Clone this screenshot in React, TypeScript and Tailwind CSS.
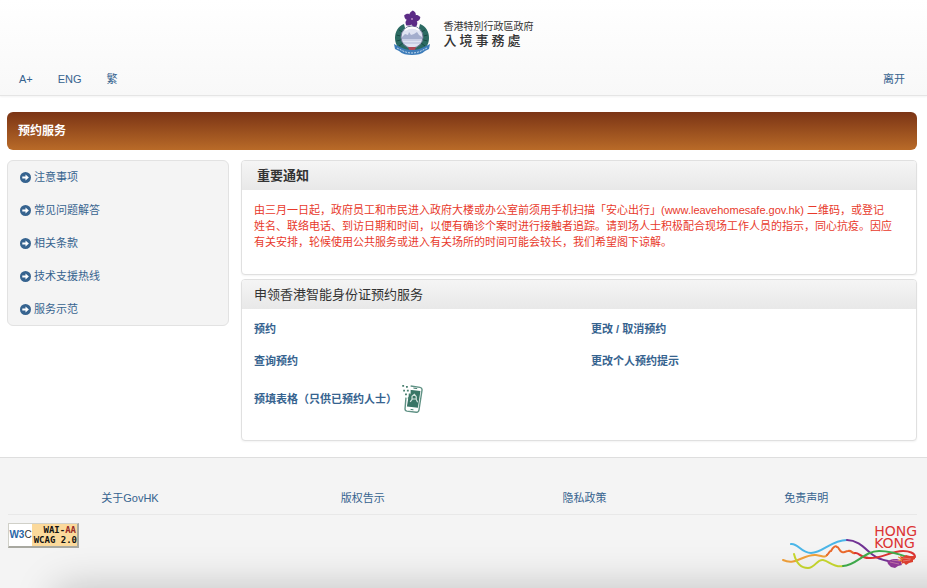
import React from 'react';

const LINK = 'text-[#36638f] hover:underline';

const MENU = ['注意事项', '常见问题解答', '相关条款', '技术支援热线', '服务示范'];
const FOOTER_LINKS = ['关于GovHK', '版权告示', '隐私政策', '免责声明'];

const PETAL = 'M18 8.500c-4-2-5-6-1-9 5 1 5 6 1 9z';

const Emblem: React.FC = () => (
  <svg viewBox="0 -1 36 46" className="w-9 h-[46px]" aria-hidden="true">
    <path d="M10 13C4 15 1 21 1 27c0 6 3 11 9 13h16c6-2 9-7 9-13 0-6-3-12-9-14l-1 4H11z" fill="#2b6a62" />
    <path d="M5 19l4 2M2.500 24l4 1M2.500 30l4-1M5 35l4-3M31 19l-4 2M33.500 24l-4 1M33.500 30l-4-1M31 35l-4-3" stroke="#174a44" strokeWidth="1" />
    <circle cx="18" cy="26" r="11" fill="#dfe3f2" stroke="#6f7794" strokeWidth="1" />
    <path d="M8 26l3-3 3 1 1-3 2 3 3-1 3-2 2 3 3 2v2H8z" fill="#a3adcd" />
    <path d="M8 29h20M9 32h18" stroke="#b3bbd8" strokeWidth="1" />
    <path d="M11 19c4-3 10-3 14 0" fill="none" stroke="#fff" strokeWidth="2" />
    <g fill="#5c2c86" transform="rotate(12 18 8)">
      <path d={PETAL} />
      <path d={PETAL} transform="rotate(72 18 8)" />
      <path d={PETAL} transform="rotate(144 18 8)" />
      <path d={PETAL} transform="rotate(216 18 8)" />
      <path d={PETAL} transform="rotate(288 18 8)" />
    </g>
    <circle cx="18" cy="8" r="1" fill="#b98cc6" />
    <path d="M14 36h8l-1 3h-6z" fill="#b04a58" />
    <path d="M0 33l6 3c7 4 17 4 24 0l6-3-1 5-4 2c-3 3-8 4-13 4S8 43 5 40l-4-2z" fill="#3d7cba" />
    <path d="M3 37l4 2c7 4 15 4 22 0l4-2" fill="none" stroke="#c3d9ec" strokeDasharray="2 1" />
  </svg>
);

const ArrowIcon: React.FC = () => (
  <svg viewBox="0 0 12 12" className="w-[11px] h-[11px]" aria-hidden="true">
    <circle cx="6" cy="6" r="6" fill="#36638f" />
    <path d="M2.500 5h3.500V2.800L9.700 6 6 9.200V7H2.500z" fill="#fff" />
  </svg>
);

const PhoneIcon: React.FC = () => (
  <svg viewBox="0 0 22 30" className="w-[21px] h-7" aria-hidden="true">
    <path d="M9 1l10 1.500q2.500.5 2.200 3L18 26.500q-.5 3-3 2.700L5 28q-2.200-.4-2-2.500l1-12" fill="#fff" stroke="#5f9184" strokeWidth="1.500" />
    <path d="M8 5l11.500 1.500-2.700 18L5 23z" fill="#397566" />
    <path d="M12 3.300l4 .6M9 26.200l3 .4" stroke="#397566" strokeWidth="1" />
    <path d="M8.500 18l2-2.500V12l2.500-2 2 2.500v3l1.500 3M10.500 15h4" fill="none" stroke="#d2e2dd" strokeWidth="1.300" />
    <path d="M5 3h4v7H4z" fill="#fff" />
    <path d="M0 0h2v2H0zM4 1h2v2H4zM1 5h2v2H1zM5 5h2v2H5zM3 9h2v2H3zM7 9h2v2H7zM6 13h2v2H6z" fill="#4b8070" />
  </svg>
);

const WaiBadge: React.FC = () => (
  <a
    href="#"
    className="flex w-[71px] h-[25px] border-t border-l border-t-[#d0d0c8] border-l-[#d0d0c8] border-b-2 border-r-2 border-b-[#a8a8a0] border-r-[#a8a8a0] bg-[#fbd99b] text-[9px] font-bold overflow-hidden"
  >
    <span className="w-[23px] bg-white text-center text-[10px] leading-[22px] text-[#2867a8]">
      W3<span className="font-normal text-[#333]">C</span>
    </span>
    <span className="flex-1 flex flex-col items-end pt-px font-['DejaVu_Sans_Mono',monospace] leading-[10px] text-[#111]">
      <span className="pr-px">WAI-<span className="text-[#972d28]">AA</span></span>
      <span>WCAG 2.0</span>
    </span>
  </a>
);

// Dragon ribbon with the word mark above its head
const BrandHongKong: React.FC = () => (
  <div className="flex flex-col items-end">
    <div className="flex flex-col pt-0.5 text-[14px] leading-3 text-[#dc3434] font-['DejaVu_Sans',sans-serif]">
      <span>HONG</span>
      <span>KONG</span>
    </div>
    <svg viewBox="0 14 135 34" className="w-[135px] h-[34px] -mt-3" aria-hidden="true">
      <g fill="none" strokeLinecap="round" strokeWidth="2">
        <path d="M9 21c7-1 10 9 20 9 12 0 20-13 36-13" stroke="#4bb6e8" />
        <path d="M65 17c12 0 19 10 26 15 5 4 10 5 15 6" stroke="#713394" />
        <path d="M1 37c13 6 20-6 33-5 7 1 9 3 11 0" stroke="#f0a03b" />
        <path d="M45 32c2-1 2-4 4-4 2-4 5-6 6-4 2 0 2 4 5 5 4 1 3-1 6-1 4-1 4 3 7 2" stroke="#ea6a2d" />
        <path d="M73 30c4-1 5 5 14 5 13 1 21-7 34-7 6 0 12 2 12 6" stroke="#dc3434" />
        <path d="M12 31c2 8 6 14 14 14 7 0 9-9 15-8 6 1 11 8 20 6" stroke="#c7d72e" />
        <path d="M61 43c13 0 21-15 36-15 10 0 20 3 28 6" stroke="#3fac4c" />
      </g>
      <path d="M105 38l6-2 4 0 5 2-1 2 1 2-4 1-3 2-4-1-3-3z" fill="#923a9a" />
      <path d="M118 33l3 1 3-2 4 1 5 0v3l-2 1v2l-4 1-3 2-2-2-3 1 1-2-2-1 2-1-3-1 2-1z" fill="#e0402f" />
      <path d="M116 34l5 2M116 37l4 1" stroke="#f0902b" strokeWidth="1" />
      <path d="M108 39l9 2M110 37l8 1M121 35l8 1M121 38l7-1" stroke="#f0b0b4" strokeWidth=".5" />
    </svg>
  </div>
);

interface PanelProps {
  title: string;
  bold?: boolean;
  children: React.ReactNode;
}

const Panel: React.FC<PanelProps> = ({ title, bold, children }) => (
  <section className="border border-[#e0e0e0] rounded bg-white shadow-xs overflow-hidden">
    <h2
      className={
        bold
          ? 'h-[29px] px-[15px] text-[13px] leading-[29px] font-bold bg-linear-to-b from-[#f5f5f5] to-[#e8e8e8]'
          : 'h-[29px] px-3 text-[13px] leading-[29px] bg-linear-to-b from-[#f5f5f5] to-[#e8e8e8]'
      }
    >
      {title}
    </h2>
    {children}
  </section>
);

const App: React.FC = () => (
  <div className="min-h-screen flex flex-col bg-white text-[11px] leading-4 text-[#333] font-['Liberation_Sans','Noto_Sans_CJK_SC',sans-serif]">
    <header className="border-b border-[#e5e5e5] bg-linear-to-b from-white to-[#f8f8f8] shadow-xs">
      <div className="flex justify-center items-center gap-3.5 pt-2.5">
        <Emblem />
        <div className="text-[#333] font-['Noto_Sans_CJK_TC',sans-serif]" lang="zh-HK">
          <p className="text-[10px] leading-[14px]">香港特別行政區政府</p>
          <p className="flex gap-[3px] text-[13px] leading-[14px] font-medium">
            {['入', '境', '事', '務', '處'].map(c => <span key={c}>{c}</span>)}
          </p>
        </div>
      </div>
      <nav className="flex justify-between pl-[19px] pr-[22px] pt-[15px] pb-2">
        <div className="flex gap-[25px]">
          <a href="#" className={LINK}>A+</a>
          <a href="#" className={LINK}>ENG</a>
          <a href="#" className={LINK}>繁</a>
        </div>
        <a href="#" className={LINK}>离开</a>
      </nav>
    </header>

    <main className="pl-[7px] pr-2.5 py-4">
      <h1 className="h-[38px] px-[11px] rounded-md bg-linear-to-b from-[#7b3415] to-[#b96b28] text-white text-xs leading-[38px] font-bold">
        预约服务
      </h1>
      <div className="flex items-start gap-3 pt-2.5">
        <aside className="w-[222px] shrink-0 border border-[#e2e2e2] rounded-md bg-[#f4f4f4] px-3 py-2">
          <ul className="flex flex-col gap-[17px]">
            {MENU.map(item => (
              <li key={item}>
                <a href="#" className="flex items-center gap-[3px] text-[#36638f]">
                  <ArrowIcon />
                  {item}
                </a>
              </li>
            ))}
          </ul>
        </aside>
        <div className="flex-1 flex flex-col gap-1">
          <Panel title="重要通知" bold>
            <p className="px-3 pt-3 pb-6 text-[#e8392b]">
              由三月一日起，政府员工和市民进入政府大楼或办公室前须用手机扫描「安心出行」(www.leavehomesafe.gov.hk) 二维码，或登记<br />
              姓名、联络电话、到访日期和时间，以便有确诊个案时进行接触者追踪。请到场人士积极配合现场工作人员的指示，同心抗疫。因应<br />
              有关安排，轮候使用公共服务或进入有关场所的时间可能会较长，我们希望阁下谅解。
            </p>
          </Panel>
          <Panel title="申领香港智能身份证预约服务">
            <div className="grid grid-cols-2 gap-y-4 pt-3 pb-[27px] *:px-3 font-bold">
              <a href="#" className={LINK}>预约</a>
              <a href="#" className={LINK}>更改 / 取消预约</a>
              <a href="#" className={LINK}>查询预约</a>
              <a href="#" className={LINK}>更改个人预约提示</a>
              <a href="#" className="flex items-center gap-[5px] text-[#36638f]">
                预填表格（只供已预约人士）
                <PhoneIcon />
              </a>
            </div>
          </Panel>
        </div>
      </div>
    </main>

    <footer className="grow relative overflow-hidden border-t border-[#dedede] bg-[#f4f4f4] pl-2 pr-2.5 pt-8">
      <nav className="grid grid-cols-[11fr_10fr_10fr_10fr] pb-2 border-b border-[#e8e8e8] text-center">
        {FOOTER_LINKS.map(item => (
          <a key={item} href="#" className={LINK}>{item}</a>
        ))}
      </nav>
      <div className="flex justify-between items-start pt-2">
        <WaiBadge />
        <BrandHongKong />
      </div>
      <div className="absolute left-14 -right-16 top-full h-20 shadow-[0_0_40px_rgba(0,0,0,0.22)]" />
    </footer>
  </div>
);

export default App;
